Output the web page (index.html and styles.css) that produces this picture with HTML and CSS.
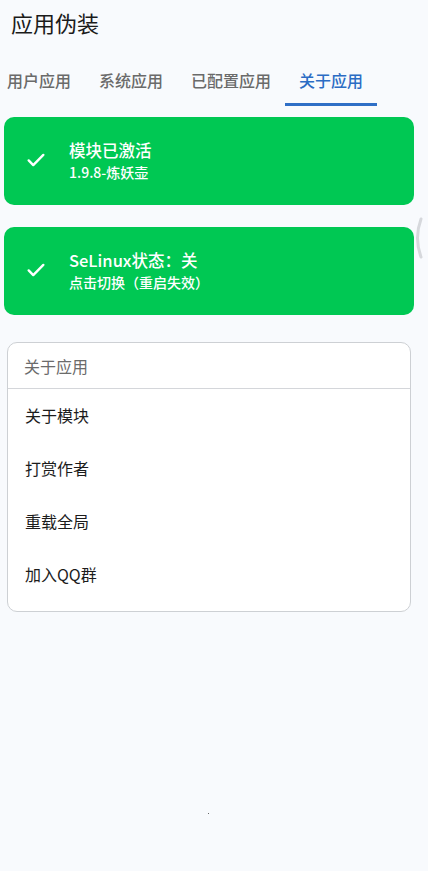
FILE: index.html
```html
<!DOCTYPE html>
<html lang="zh-CN">
<head>
<meta charset="utf-8">
<title>应用伪装</title>
<link rel="stylesheet" href="styles.css">
</head>
<body>
<div class="page">
  <header class="title">应用伪装</header>
  <nav class="tabs">
    <div class="tab">用户应用</div>
    <div class="tab">系统应用</div>
    <div class="tab">已配置应用</div>
    <div class="tab active">关于应用</div>
  </nav>
  <section class="status">
    <div class="card">
      <svg class="check" width="22" height="22" viewBox="0 0 24 24"><path d="M4 12.5l5 5L20 6.5" fill="none" stroke="#fff" stroke-width="2.6" stroke-linecap="round" stroke-linejoin="round"/></svg>
      <div class="texts">
        <div class="main">模块已激活</div>
        <div class="sub">1.9.8-炼妖壶</div>
      </div>
    </div>
    <div class="card">
      <svg class="check" width="22" height="22" viewBox="0 0 24 24"><path d="M4 12.5l5 5L20 6.5" fill="none" stroke="#fff" stroke-width="2.6" stroke-linecap="round" stroke-linejoin="round"/></svg>
      <div class="texts">
        <div class="main">SeLinux状态：关</div>
        <div class="sub">点击切换（重启失效）</div>
      </div>
    </div>
  </section>
  <section class="list">
    <div class="list-head">关于应用</div>
    <div class="item">关于模块</div>
    <div class="item">打赏作者</div>
    <div class="item">重载全局</div>
    <div class="item">加入QQ群</div>
  </section>
  <svg class="arc" width="12" height="44" viewBox="0 0 12 44"><path d="M8 3 Q1 22 8 41" fill="none" stroke="#d6d8dc" stroke-width="3" stroke-linecap="round"/></svg>
  <div class="dot"></div>
</div>
</body>
</html>
```
FILE: styles.css
```css
html, body {
  margin: 0;
  padding: 0;
  background: #f8fafd;
}
body {
  font-family: "Noto Sans CJK SC", "Noto Sans", sans-serif;
  width: 428px;
  height: 871px;
  overflow: hidden;
}
.page {
  position: relative;
  height: 871px;
}
.title {
  font-size: 22px;
  color: #1b1b1b;
  padding: 6px 0 0 11px;
  height: 38px;
  line-height: 32px;
}
.tabs {
  display: flex;
  margin-left: -7px;
  height: 62px;
  align-items: stretch;
}
.tab {
  padding: 25px 14px 0;
  font-size: 16px;
  line-height: 22px;
  color: #6a6a6a;
  font-weight: 500;
  box-sizing: border-box;
  border-bottom: 3px solid transparent;
}
.tab.active {
  color: #2b6cc4;
  border-bottom-color: #2f6fc6;
}
.status {
  display: flex;
  flex-direction: column;
  gap: 22px;
  padding: 11px 14px 0 4px;
}
.card {
  background: #00c853;
  border-radius: 10px;
  height: 88px;
  display: flex;
  align-items: center;
  color: #fff;
}
.check {
  margin-left: 21px;
  margin-right: 22px;
  margin-top: -2px;
}
.texts {
  display: flex;
  flex-direction: column;
  margin-top: -1px;
}
.main {
  font-size: 16.5px;
  line-height: 22px;
  font-weight: 500;
}
.sub {
  font-size: 14px;
  line-height: 22px;
  font-weight: 500;
}
.list {
  margin: 27px 17px 0 7px;
  background: #fff;
  border: 1px solid #cdd0d4;
  border-radius: 10px;
  padding-bottom: 10px;
}
.list-head {
  height: 45px;
  line-height: 46px;
  padding-left: 16px;
  font-size: 16px;
  color: #6b6b6b;
  border-bottom: 1px solid #d4d6da;
}
.item {
  height: 53px;
  line-height: 53px;
  padding-left: 17px;
  font-size: 16px;
  color: #1c1c1c;
}
.arc {
  position: absolute;
  left: 413px;
  top: 216px;
}
.dot {
  position: absolute;
  left: 208px;
  top: 813px;
  width: 1px;
  height: 1px;
  background: #666;
}
```
